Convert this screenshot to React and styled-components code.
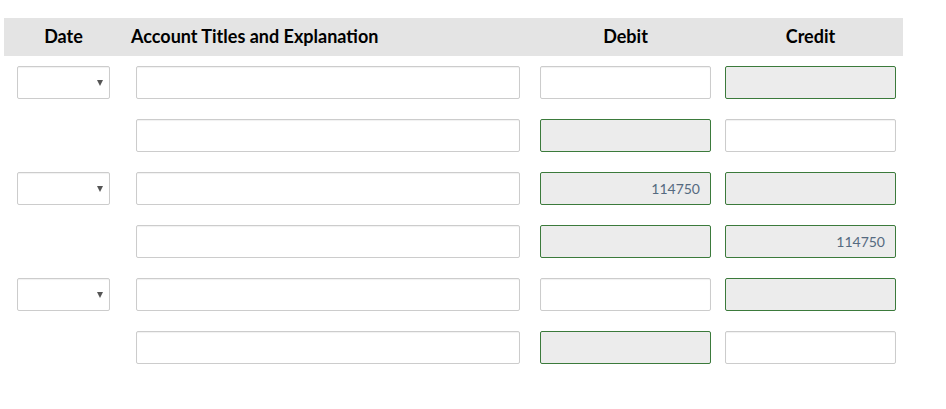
import React from "react";
import styled, { createGlobalStyle } from "styled-components";

const Global = createGlobalStyle`
  html, body { margin: 0; padding: 0; background: #fff; }
  body { font-family: "Lato", "Liberation Sans", sans-serif; }
`;

const Page = styled.div`
  padding: 18px 0 0 4px;
`;

const Table = styled.div`
  width: 899px;
  display: grid;
  grid-template-columns: 106px 410px 191px 192px;
`;

const HeaderCell = styled.div`
  background: #e4e4e4;
  height: 38px;
  box-sizing: border-box;
  padding-bottom: 2px;
  display: flex;
  align-items: center;
  justify-content: ${(p) => (p.$left ? "flex-start" : "center")};
  padding-left: ${(p) => p.$pl}px;
  padding-right: ${(p) => p.$pr || 0}px;
  font-weight: 700;
  font-size: 18px;
  color: #000;
  margin-bottom: 10px;
`;

const Cell = styled.div`
  padding-left: ${(p) => p.$pl}px;
  padding-right: ${(p) => p.$pr || 0}px;
  height: 53px;
  box-sizing: border-box;
`;

const Field = styled.div`
  box-sizing: border-box;
  height: 33px;
  width: 100%;
  border-radius: 2px;
  border: 1px solid ${(p) => (p.$filled ? "#3b7a3b" : "#cccccc")};
  background: ${(p) => (p.$filled ? "#ececec" : "#ffffff")};
  box-shadow: ${(p) => (p.$filled ? "none" : "inset 0 1px 1px rgba(0,0,0,0.06)")};
  display: flex;
  align-items: center;
  justify-content: flex-end;
  padding-right: 10px;
  font-size: 14px;
  color: #556a80;
`;

const Select = styled(Field)`
  width: 93px;
  padding-right: 6px;
`;

const Arrow = styled.span`
  width: 0;
  height: 0;
  border-left: 3.5px solid transparent;
  border-right: 3.5px solid transparent;
  border-top: 6px solid #555;
  margin-top: 1px;
`;

const rows = [
  { date: true, debit: null, credit: "" },
  { date: false, debit: "", credit: null },
  { date: true, debit: "114750", credit: "" },
  { date: false, debit: "", credit: "114750" },
  { date: true, debit: null, credit: "" },
  { date: false, debit: "", credit: null },
];

export default function App() {
  return (
    <>
      <Global />
      <Page>
        <Table>
          <HeaderCell $pl={13}>Date</HeaderCell>
          <HeaderCell $pl={21} $left>Account Titles and Explanation</HeaderCell>
          <HeaderCell $pl={20}>Debit</HeaderCell>
          <HeaderCell $pl={14} $pr={7}>Credit</HeaderCell>
          {rows.map((r, i) => (
            <React.Fragment key={i}>
              <Cell $pl={13}>
                {r.date && (
                  <Select>
                    <Arrow />
                  </Select>
                )}
              </Cell>
              <Cell $pl={26}>
                <Field />
              </Cell>
              <Cell $pl={20}>
                <Field $filled={r.debit !== null}>{r.debit}</Field>
              </Cell>
              <Cell $pl={14} $pr={7}>
                <Field $filled={r.credit !== null}>{r.credit}</Field>
              </Cell>
            </React.Fragment>
          ))}
        </Table>
      </Page>
    </>
  );
}
